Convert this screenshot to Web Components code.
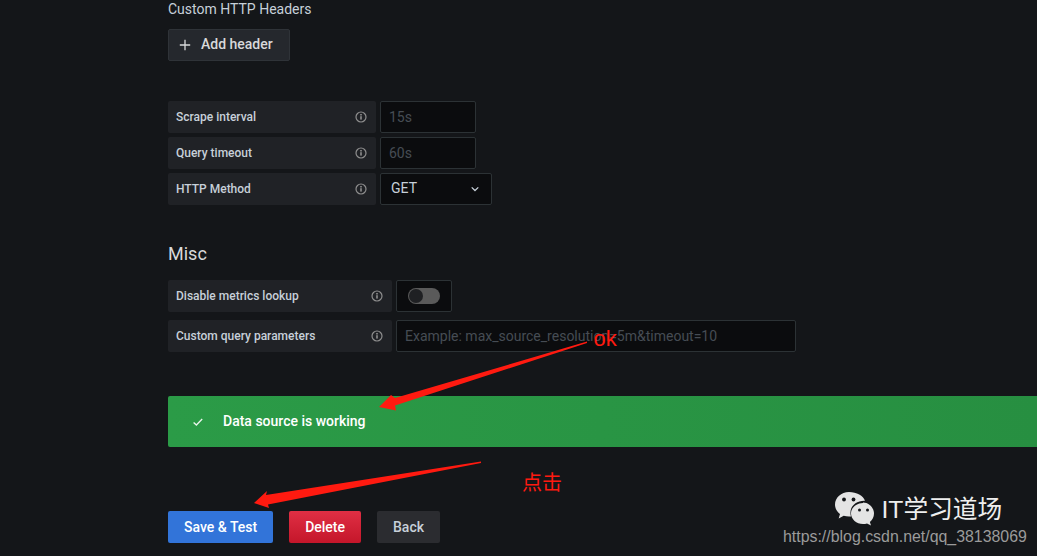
<!DOCTYPE html>
<html>
<head>
<meta charset="utf-8">
<title>Data source</title>
<style>
    html, body { margin: 0; height: 100%; background: #141619; overflow: hidden; }
    body { font-family: Roboto, "Liberation Sans", sans-serif; color: #c7d0d9; font-size: 14px; }
</style>
</head>
<body>
<ds-page>
    <ds-subtitle>Custom HTTP Headers</ds-subtitle>
    <ds-button kind="add" icon="plus" style="margin-top:11px">Add header</ds-button>

    <ds-group style="margin-top:40px">
        <ds-row label="Scrape interval" width="208"><ds-input placeholder="15s" width="96"></ds-input></ds-row>
        <ds-row label="Query timeout" width="208"><ds-input placeholder="60s" width="96"></ds-input></ds-row>
        <ds-row label="HTTP Method" width="208"><ds-select value="GET"></ds-select></ds-row>
    </ds-group>

    <ds-heading>Misc</ds-heading>
    <ds-group gap="8">
        <ds-row label="Disable metrics lookup" width="224"><ds-switch></ds-switch></ds-row>
        <ds-row label="Custom query parameters" width="224"><ds-input placeholder="Example: max_source_resolution=5m&amp;timeout=10" width="400"></ds-input></ds-row>
    </ds-group>

    <ds-alert>Data source is working</ds-alert>

    <ds-actions>
        <ds-button kind="primary">Save &amp; Test</ds-button>
        <ds-button kind="danger">Delete</ds-button>
        <ds-button kind="back">Back</ds-button>
    </ds-actions>
</ds-page>
<ds-markup></ds-markup>

<script>
class DsPage extends HTMLElement {
    constructor() {
        super();
        this.attachShadow({ mode: 'open' }).innerHTML = `
            <style>
                :host { display: block; padding: 1px 0 0 168px; }
            </style>
            <slot></slot>
        `;
    }
}

class DsSubtitle extends HTMLElement {
    constructor() {
        super();
        this.attachShadow({ mode: 'open' }).innerHTML = `
            <style>
                :host { display: block; font-size: 14px; line-height: 17px; color: #c7d0d9; }
            </style>
            <slot></slot>
        `;
    }
}

class DsHeading extends HTMLElement {
    constructor() {
        super();
        this.attachShadow({ mode: 'open' }).innerHTML = `
            <style>
                :host { display: block; margin-top: 38px; font-size: 18px; line-height: 22px; color: #d8d9da; margin-bottom: 15px; }
            </style>
            <slot></slot>
        `;
    }
}

class DsGroup extends HTMLElement {
    constructor() {
        super();
        const gap = this.getAttribute('gap') || 4;
        this.attachShadow({ mode: 'open' }).innerHTML = `
            <style>
                :host { display: flex; flex-direction: column; gap: ${gap}px; }
            </style>
            <slot></slot>
        `;
    }
}

const INFO_ICON = `<svg width="12" height="12" viewBox="0 0 12 12" fill="none">
    <circle cx="6" cy="6" r="5" stroke="#8e8e8e" stroke-width="1.2"/>
    <rect x="5.2" y="5.2" width="1.6" height="3.4" fill="#8e8e8e"/>
    <rect x="5.2" y="3" width="1.6" height="1.5" fill="#8e8e8e"/>
</svg>`;

class DsRow extends HTMLElement {
    constructor() {
        super();
        const label = this.getAttribute('label') || '';
        const width = this.getAttribute('width') || 208;
        this.attachShadow({ mode: 'open' }).innerHTML = `
            <style>
                :host { display: flex; gap: 4px; height: 32px; }
                .label {
                    width: ${width}px;
                    box-sizing: border-box;
                    padding: 0 9px 0 8px;
                    display: flex;
                    align-items: center;
                    justify-content: space-between;
                    background: #202226;
                    border-radius: 2px;
                    font-size: 12px;
                    font-weight: 500;
                    color: #c7d0d9;
                }
                svg { display: block; }
            </style>
            <div class="label"><span>${label}</span>${INFO_ICON}</div>
            <slot></slot>
        `;
    }
}

class DsInput extends HTMLElement {
    constructor() {
        super();
        const width = this.getAttribute('width') || 96;
        const ph = (this.getAttribute('placeholder') || '').replace(/&/g, '&amp;');
        this.attachShadow({ mode: 'open' }).innerHTML = `
            <style>
                :host {
                    display: flex;
                    align-items: center;
                    box-sizing: border-box;
                    width: ${width}px;
                    height: 32px;
                    padding: 0 8px;
                    background: #0b0c0e;
                    border: 1px solid #2c3235;
                    border-radius: 2px;
                    font-size: 14px;
                    color: #464c54;
                }
            </style>
            <span>${ph}</span>
        `;
    }
}

class DsSelect extends HTMLElement {
    constructor() {
        super();
        this.attachShadow({ mode: 'open' }).innerHTML = `
            <style>
                :host {
                    display: flex;
                    align-items: center;
                    justify-content: space-between;
                    box-sizing: border-box;
                    width: 112px;
                    height: 32px;
                    padding: 0 11px 0 10px;
                    background: #0b0c0e;
                    border: 1px solid #2c3235;
                    border-radius: 2px;
                    font-size: 14px;
                    color: #c7d0d9;
                }
                span { margin-bottom: 2px; }
                svg { display: block; }
            </style>
            <span>${this.getAttribute('value') || ''}</span>
            <svg width="10" height="6" viewBox="0 0 10 6" fill="none"><path d="M1.7 1.4 L5 4.5 L8.300 1.400" stroke="#c7d0d9" stroke-width="1.3"/></svg>
        `;
    }
}

class DsSwitch extends HTMLElement {
    constructor() {
        super();
        this.attachShadow({ mode: 'open' }).innerHTML = `
            <style>
                :host {
                    display: flex;
                    align-items: center;
                    justify-content: center;
                    box-sizing: border-box;
                    width: 56px;
                    height: 32px;
                    background: #0b0c0e;
                    border: 1px solid #2c3235;
                    border-radius: 2px;
                }
                .track { width: 32px; height: 16px; border-radius: 8px; background: #5a5a5a; display: flex; align-items: center; padding-left: 1px; box-sizing: border-box; }
                .knob { width: 14px; height: 14px; border-radius: 50%; background: #1f2023; }
            </style>
            <div class="track"><div class="knob"></div></div>
        `;
    }
}

class DsAlert extends HTMLElement {
    constructor() {
        super();
        this.attachShadow({ mode: 'open' }).innerHTML = `
            <style>
                :host {
                    display: flex;
                    align-items: center;
                    height: 51px;
                    margin-top: 44px;
                    padding-left: 24px;
                    background: linear-gradient(90deg, #2b9b47, #278f41);
                    border-radius: 2px 0 0 2px;
                    color: #fff;
                    font-size: 14px;
                    font-weight: 500;
                }
                svg { display: block; margin-right: 19px; }
                span { margin-bottom: 2px; }
            </style>
            <svg width="12" height="12" viewBox="0 0 12 12" fill="none"><path d="M1.6 6.4 L4.4 9 L10.2 3" stroke="#eaf5ec" stroke-width="1.3"/></svg>
            <span><slot></slot></span>
        `;
    }
}

class DsActions extends HTMLElement {
    constructor() {
        super();
        this.attachShadow({ mode: 'open' }).innerHTML = `
            <style>
                :host { display: flex; gap: 16px; margin-top: 64px; }
            </style>
            <slot></slot>
        `;
    }
}

const BUTTON_KINDS = {
    primary: 'background: #3274d9; color: #fff; padding: 0 16px;',
    danger: 'background: linear-gradient(180deg, #e02f44, #c4162a); color: #fff; padding: 0 16px;',
    back: 'background: #2b2c30; color: #c7d0d9; padding: 0 16px;',
    add: 'background: #25282d; border: 1px solid #2f3338; color: #d8d9da; padding: 0 16px 0 10px;'
};

class DsButton extends HTMLElement {
    constructor() {
        super();
        const kind = this.getAttribute('kind') || 'primary';
        const icon = this.getAttribute('icon') === 'plus'
            ? `<svg width="12" height="12" viewBox="0 0 12 12" fill="none"><path d="M6 .8 V11.2 M.8 6 H11.2" stroke="#d8d9da" stroke-width="1.3"/></svg>`
            : '';
        this.attachShadow({ mode: 'open' }).innerHTML = `
            <style>
                :host {
                    display: inline-flex;
                    width: fit-content;
                    align-items: center;
                    gap: 10px;
                    box-sizing: border-box;
                    height: 32px;
                    border-radius: 2px;
                    font-size: 14px;
                    font-weight: 500;
                    cursor: pointer;
                    ${BUTTON_KINDS[kind]}
                }
                svg { display: block; }
                span { margin-bottom: ${kind === 'add' ? 2 : 0}px; }
            </style>
            ${icon}<span><slot></slot></span>
        `;
    }
}

// screenshot annotations: they sit on top of the form, so this one is a free canvas
class DsMarkup extends HTMLElement {
    constructor() {
        super();
        this.attachShadow({ mode: 'open' }).innerHTML = `
            <style>
                :host { position: absolute; inset: 0; display: block; pointer-events: none; }
                svg { position: absolute; left: 0; top: 0; }
                .ok { position: absolute; left: 593.500px; top: 325px; font: 22px/28px "Liberation Sans", sans-serif; color: #ff1a10; }
                .click { position: absolute; left: 522px; top: 469px; font: 20px/26px "Noto Sans CJK SC", sans-serif; color: #ff1a10; }
                .name { position: absolute; left: 881.500px; top: 493px; font: 24.700px/33px "Liberation Sans", "Noto Sans CJK SC", sans-serif; color: #eeeeee; white-space: nowrap; }
                .url { position: absolute; left: 783px; top: 528px; font: 15.900px/18px "Liberation Sans", sans-serif; color: #9b9b9b; white-space: nowrap; }
            </style>
            <svg width="1037" height="556" viewBox="0 0 1037 556">
                <polygon fill="#ff1a10" points="587,341.500 587,343 395,405.500 396,410.500 379,407 391,395 395,398"/>
                <polygon fill="#ff1a10" points="481,461.500 481,463 268,504.500 269,508 254,503 267,491 266,495"/>
                <path fill="#e4e4e4" d="M849 492c-7.800 0-14 5.600-14 12.500 0 3.800 1.900 7.200 5 9.500l-1.300 4.500 5-2.700c1.700.5 3.400.8 5.300.8h2c-.4-1.200-.6-2.500-.6-3.800 0-7 6.100-12 13.800-12h.8c-1.600-5-8.400-8.800-16-8.800z"/>
                <circle cx="844" cy="499.500" r="1.900" fill="#141619"/>
                <circle cx="853.500" cy="499.500" r="1.900" fill="#141619"/>
                <path fill="#e4e4e4" d="M863 503c-6.500 0-12 4.700-12 10.500S856.500 524 863 524c1.400 0 2.800-.2 4-.6l4 2.200-1.100-3.600c2.500-2 4.100-5 4.100-8.500 0-5.800-5-11-11-11z"/>
                <circle cx="859.500" cy="510" r="1.500" fill="#141619"/>
                <circle cx="867.500" cy="510" r="1.500" fill="#141619"/>
            </svg>
            <span class="ok">ok</span>
            <span class="click">点击</span>
            <span class="name">IT学习道场</span>
            <span class="url">https://blog.csdn.net/qq_38138069</span>
        `;
    }
}

customElements.define('ds-page', DsPage);
customElements.define('ds-subtitle', DsSubtitle);
customElements.define('ds-heading', DsHeading);
customElements.define('ds-group', DsGroup);
customElements.define('ds-row', DsRow);
customElements.define('ds-input', DsInput);
customElements.define('ds-select', DsSelect);
customElements.define('ds-switch', DsSwitch);
customElements.define('ds-alert', DsAlert);
customElements.define('ds-actions', DsActions);
customElements.define('ds-button', DsButton);
customElements.define('ds-markup', DsMarkup);
</script>
</body>
</html>
